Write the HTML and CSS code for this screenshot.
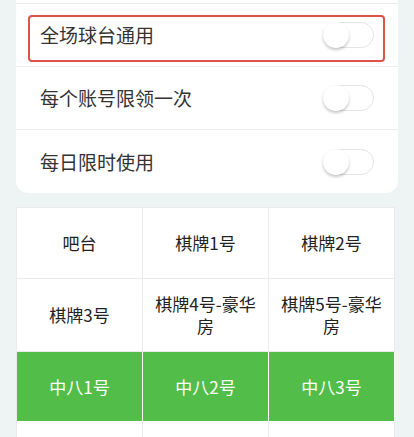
FILE: index.html
```html
<!DOCTYPE html>
<html lang="zh-CN">

<head>
	<meta charset="UTF-8">
	<meta name="viewport" content="width=device-width, initial-scale=1.0">
	<title>优惠券设置</title>
	<link rel="stylesheet" href="styles.css">
</head>

<body>
	<div class="card">
		<div class="row"></div>
		<div class="row">
			<span class="label">全场球台通用</span>
			<span class="switch"></span>
			<span class="highlight"></span>
		</div>
		<div class="row">
			<span class="label">每个账号限领一次</span>
			<span class="switch"></span>
		</div>
		<div class="row">
			<span class="label">每日限时使用</span>
			<span class="switch"></span>
		</div>
	</div>

	<div class="tables">
		<div class="cell">吧台</div>
		<div class="cell">棋牌1号</div>
		<div class="cell">棋牌2号</div>
		<div class="cell">棋牌3号</div>
		<div class="cell">棋牌4号-豪华房</div>
		<div class="cell">棋牌5号-豪华房</div>
		<div class="cell active">中八1号</div>
		<div class="cell active">中八2号</div>
		<div class="cell active">中八3号</div>
		<div class="cell"></div>
		<div class="cell"></div>
		<div class="cell"></div>
	</div>
</body>

</html>
```

FILE: styles.css
```css
* {
	margin: 0;
	padding: 0;
	box-sizing: border-box;
}

body {
	font-family: "Noto Sans CJK SC", "Noto Sans", sans-serif;
	background: #eef3f3;
	width: 414px;
	height: 437px;
	overflow: hidden;
}

.card {
	background: #fff;
	border-radius: 12px;
	margin: -59px 16px 0;
}

.row {
	position: relative;
	display: flex;
	align-items: center;
	justify-content: space-between;
	height: 63px;
	padding: 0 24px;
	border-bottom: 1px solid #ececec;
}

.row:last-child {
	border-bottom: none;
}

.label {
	font-size: 19px;
	color: #333;
	line-height: 24px;
}

.switch {
	position: relative;
	width: 51px;
	height: 26px;
	border: 1px solid #e4e4e4;
	border-radius: 13px;
	background: #fff;
}

.switch::before {
	content: "";
	position: absolute;
	left: -1px;
	top: -1px;
	width: 26px;
	height: 26px;
	border-radius: 50%;
	background: #fff;
	box-shadow: 0 2px 3px rgba(0, 0, 0, 0.22);
}

.highlight {
	position: absolute;
	top: 11px;
	left: 12px;
	right: 13px;
	bottom: 4px;
	border: 2px solid #e0514a;
	border-radius: 4px;
}

.tables {
	display: grid;
	grid-template-columns: repeat(3, 126px);
	width: 379px;
	margin: 14px 0 0 16px;
	border-top: 1px solid #ebebeb;
	border-left: 1px solid #ebebeb;
}

.cell {
	display: flex;
	align-items: center;
	justify-content: center;
	min-height: 71px;
	padding: 14px 8px;
	background: #fff;
	border-right: 1px solid #ebebeb;
	border-bottom: 1px solid #ebebeb;
	font-size: 17px;
	line-height: 22px;
	color: #222;
	text-align: center;
}

.cell.active {
	min-height: 70px;
	background: #52bd48;
	color: #fff;
	border-right-color: #fff;
	border-bottom-color: #fff;
}
```
